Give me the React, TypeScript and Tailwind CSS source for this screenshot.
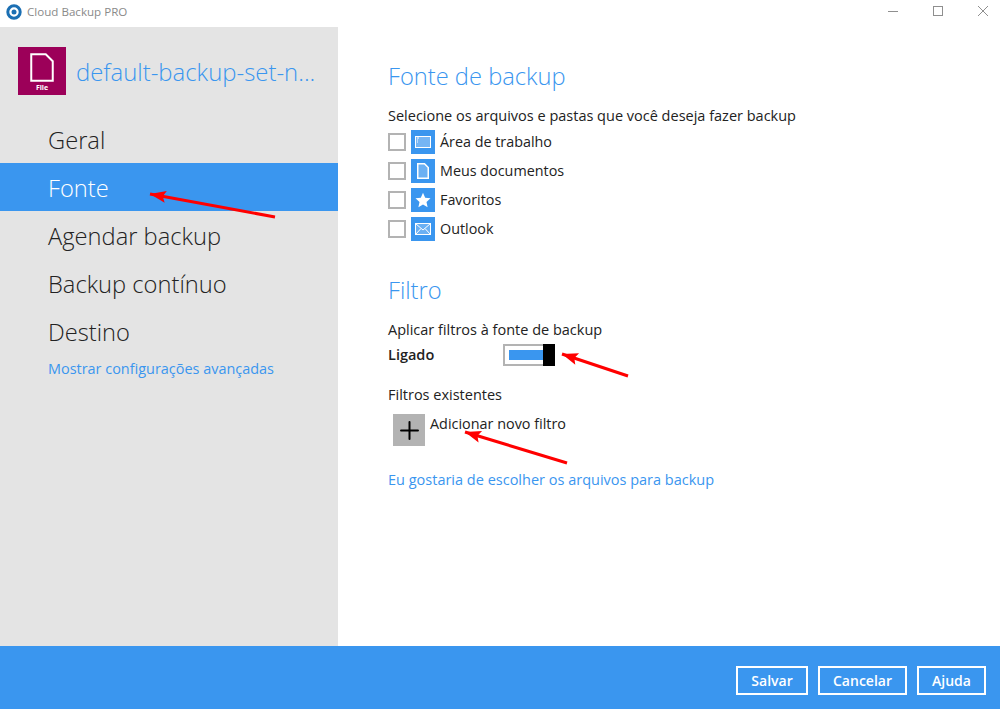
import { Plus } from 'lucide-react';

const font = { fontFamily: '"Open Sans", sans-serif' };

function DesktopIcon() {
  return (
    <svg width="16" height="12" viewBox="0 0 16 12" fill="none">
      <rect x="0.5" y="0.5" width="15" height="11" fill="#fff" fillOpacity="0.3" stroke="#fff" />
      <path d="M2 2h2M2 4h1M2 6h1" stroke="#fff" />
    </svg>
  );
}

function DocIcon() {
  return (
    <svg width="12" height="16" viewBox="0 0 12 16" fill="none">
      <path d="M.75.75h6.75l3.75 3.75v10.75H.75z" fill="#fff" fillOpacity="0.25" stroke="#fff" strokeWidth="1.5" />
    </svg>
  );
}

function StarIcon() {
  return (
    <svg width="16" height="16" viewBox="0 0 16 16" fill="#fff">
      <path d="M8 .8l2.2 4.9 5.3.6-4 3.6 1.1 5.3L8 12.5l-4.6 2.7 1.1-5.3-4-3.6 5.3-.6z" />
    </svg>
  );
}

function MailIcon() {
  return (
    <svg width="16" height="12" viewBox="0 0 16 12" fill="none">
      <rect x="0.5" y="0.5" width="15" height="11" fill="#fff" fillOpacity="0.25" stroke="#fff" />
      <path d="M.5.5L8 7l7.5-6.5M.5 11.5L6 5.5M15.5 11.5L10 5.5" stroke="#fff" />
    </svg>
  );
}

const sources = [
  { label: 'Área de trabalho', icon: <DesktopIcon /> },
  { label: 'Meus documentos', icon: <DocIcon /> },
  { label: 'Favoritos', icon: <StarIcon /> },
  { label: 'Outlook', icon: <MailIcon /> },
];

const navItems = ['Geral', 'Fonte', 'Agendar backup', 'Backup contínuo', 'Destino'];

function Arrow({ x1, y1, x2, y2 }: { x1: number; y1: number; x2: number; y2: number }) {
  const angle = (Math.atan2(y1 - y2, x1 - x2) * 180) / Math.PI;
  return (
    <g>
      <line x1={x1} y1={y1} x2={x2} y2={y2} stroke="#ff0000" strokeWidth="3" />
      <path d="M0 0L16 -6L13 0L16 6z" fill="#ff0000" transform={`translate(${x2} ${y2}) rotate(${angle})`} />
    </g>
  );
}

export default function App() {
  return (
    <div className="relative flex h-[709px] w-[1000px] flex-col overflow-hidden bg-white text-[#222]" style={font}>
      <header className="flex h-[27px] shrink-0 items-start bg-white pl-[6px] pt-[4px]">
        <svg width="16" height="16" viewBox="0 0 16 16" fill="none">
          <circle cx="8" cy="8" r="6.2" stroke="#1b6fb3" strokeWidth="3" />
          <circle cx="8" cy="8" r="2.5" fill="#1b6fb3" />
        </svg>
        <span className="ml-[5px] text-[11.6px] leading-4 text-[#8a8a8a]">Cloud Backup PRO</span>
        <div className="ml-auto flex items-start gap-[35px] pr-[12px] pt-[2px]">
          <svg width="10" height="10" viewBox="0 0 10 10" stroke="#8f8f8f" fill="none">
            <path d="M0 5.5h10" />
          </svg>
          <svg width="10" height="10" viewBox="0 0 10 10" stroke="#8f8f8f" fill="none">
            <rect x="0.5" y="0.5" width="9" height="9" />
          </svg>
          <svg width="10" height="10" viewBox="0 0 10 10" stroke="#8f8f8f" fill="none">
            <path d="M0 0l10 10M10 0L0 10" />
          </svg>
        </div>
      </header>

      <div className="flex min-h-0 flex-1">
        <aside className="w-[338px] shrink-0 bg-[#e4e4e4]">
          <div className="flex h-[88px] items-start pl-[18px] pt-[20px]">
            <div className="flex h-12 w-12 flex-col items-center bg-[#9c0059] pt-[6px]">
              <svg width="24" height="29" viewBox="0 0 24 29" fill="none">
                <path d="M1.25 1.25h14.5l7 7v19.5H1.25z" stroke="#fff" strokeWidth="2" fill="#9c0059" />
              </svg>
              <span className="mt-[2px] text-[7px] font-bold leading-[8px] text-white">File</span>
            </div>
            <span className="ml-[10px] text-[23.9px] font-light leading-[50px] text-[#3a96ef]">default-backup-set-n...</span>
          </div>
          <nav>
            {navItems.map((item) => (
              <div
                key={item}
                className={`flex h-12 items-center pl-12 pt-[4px] text-[23.7px] font-light ${
                  item === 'Fonte' ? 'bg-[#3a96ef] text-white' : 'text-[#222]'
                }`}
              >
                {item}
              </div>
            ))}
          </nav>
          <a className="mt-[2px] block pl-12 text-[14.45px] leading-[24px] text-[#3a96ef]">Mostrar configurações avançadas</a>
        </aside>

        <main className="flex-1 pl-[50px] pt-[32px] text-[14.5px]">
          <h2 className="text-[23.7px] font-light leading-[34px] text-[#3a96ef]">Fonte de backup</h2>
          <p className="mt-[11px] leading-[24px]">Selecione os arquivos e pastas que você deseja fazer backup</p>
          <div className="mt-[2px] flex flex-col gap-[5px]">
            {sources.map((s) => (
              <div key={s.label} className="flex h-6 items-center">
                <span className="h-[18px] w-[18px] border-2 border-[#b3b3b3] bg-white" />
                <span className="ml-[5px] flex h-6 w-6 items-center justify-center bg-[#3a96ef]">{s.icon}</span>
                <span className="ml-[5px] text-[14.35px]">{s.label}</span>
              </div>
            ))}
          </div>

          <h2 className="mt-[32px] text-[23.7px] font-light leading-[34px] text-[#3a96ef]">Filtro</h2>
          <p className="mt-[11px] leading-[24px]">Aplicar filtros à fonte de backup</p>
          <div className="mt-px flex h-[24px] items-center">
            <span className="w-[115px] font-semibold">Ligado</span>
            <span className="flex h-[22px] w-[52px] items-center border-2 border-[#b3b3b3] pl-1">
              <span className="h-[10px] flex-1 bg-[#3a96ef]" />
              <span className="-mr-[2px] h-[22px] w-3 bg-black" />
            </span>
          </div>
          <p className="mt-[16px] leading-[24px]">Filtros existentes</p>
          <div className="ml-[5px] mt-[7px] flex items-start">
            <span className="flex h-8 w-8 items-center justify-center bg-[#b3b3b3] text-black">
              <Plus size={29} strokeWidth={1.65} />
            </span>
            <span className="ml-[5px] text-[14.4px] leading-[20px]">Adicionar novo filtro</span>
          </div>
          <a className="mt-[22px] block leading-[24px] text-[#3a96ef]">Eu gostaria de escolher os arquivos para backup</a>
        </main>
      </div>

      <footer className="flex h-[63px] shrink-0 items-start justify-end gap-[10px] bg-[#3a96ef] pr-[14px] pt-[20px]">
        {[
          { label: 'Salvar', width: 'w-[72px]' },
          { label: 'Cancelar', width: 'w-[89px]' },
          { label: 'Ajuda', width: 'w-[69px]' },
        ].map((b) => (
          <button
            key={b.label}
            className={`h-[29px] border-2 border-white text-sm font-semibold text-white ${b.width}`}
          >
            {b.label}
          </button>
        ))}
      </footer>

      <svg className="pointer-events-none absolute inset-0" width="1000" height="709">
        <Arrow x1={275} y1={217} x2={150} y2={194} />
        <Arrow x1={628} y1={376} x2={562} y2={354} />
        <Arrow x1={567} y1={463} x2={465} y2={432} />
      </svg>
    </div>
  );
}
